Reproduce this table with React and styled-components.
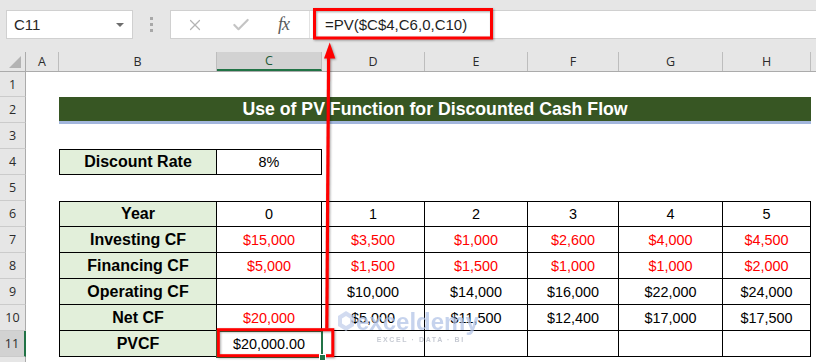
import React from 'react';
import styled, { createGlobalStyle, css } from 'styled-components';
import { X, Check } from 'lucide-react';

const GRID = '26px 33px 158px 105px 103px 103px 91px 104px 88px 1fr';
const COLUMNS = ['A', 'B', 'C', 'D', 'E', 'F', 'G', 'H'];

const TABLE = [
  { row: 6, label: 'Year', values: ['0', '1', '2', '3', '4', '5'], red: 0 },
  { row: 7, label: 'Investing CF', values: ['$15,000', '$3,500', '$1,000', '$2,600', '$4,000', '$4,500'], red: 6 },
  { row: 8, label: 'Financing CF', values: ['$5,000', '$1,500', '$1,500', '$1,000', '$1,000', '$2,000'], red: 6 },
  { row: 9, label: 'Operating CF', values: ['', '$10,000', '$14,000', '$16,000', '$22,000', '$24,000'], red: 0 },
  { row: 10, label: 'Net CF', values: ['$20,000', '$5,000', '$11,500', '$12,400', '$17,000', '$17,500'], red: 1 },
  { row: 11, label: 'PVCF', values: ['$20,000.00', '', '', '', '', ''], red: 0 },
];

const GlobalStyle = createGlobalStyle`
  html, body {
    margin: 0;
    padding: 0;
    background: #fff;
  }
  body {
    font-family: "Liberation Sans", Arial, sans-serif;
  }
`;

const Window = styled.div`
  position: relative;
  width: 816px;
  height: 362px;
  overflow: hidden;
  background: #fff;
`;

/* ---------- formula bar ---------- */

const Toolbar = styled.div`
  display: flex;
  align-items: flex-start;
  box-sizing: border-box;
  height: 52px;
  padding: 10px 0 0 6px;
  background: #e6e6e6;
`;

const NameBox = styled.div`
  display: flex;
  align-items: center;
  justify-content: space-between;
  box-sizing: border-box;
  width: 127px;
  height: 29px;
  padding: 0 8px 0 7px;
  background: #fff;
  border: 1px solid #d0d0d0;
  font-size: 15px;
  color: #262626;
`;

const DropArrow = styled.span`
  width: 0;
  height: 0;
  border-left: 4px solid transparent;
  border-right: 4px solid transparent;
  border-top: 4px solid #6d6d6d;
`;

const Grip = styled.div`
  display: flex;
  flex-direction: column;
  align-items: center;
  justify-content: center;
  gap: 3px;
  width: 37px;
  height: 29px;

  span {
    width: 3px;
    height: 3px;
    background: #a8a8a8;
  }
`;

const FormulaBar = styled.div`
  display: flex;
  align-items: center;
  flex: 1;
  box-sizing: border-box;
  height: 29px;
  background: #fff;
  border: 1px solid #d0d0d0;
  border-right: none;
`;

const BarButtons = styled.div`
  display: flex;
  align-items: center;
  box-sizing: border-box;
  width: 139px;
  height: 100%;
  border-right: 1px solid #e2e2e2;
  padding-left: 15px;
  gap: 27px;
`;

const Fx = styled.span`
  font-family: "Liberation Serif", "Times New Roman", serif;
  font-style: italic;
  font-size: 18px;
  color: #5a5a5a;
  letter-spacing: -1px;
`;

const FormulaText = styled.div`
  padding-left: 15px;
  font-size: 15px;
  color: #1f1f1f;
`;

/* ---------- sheet ---------- */

const HeaderRow = styled.div`
  display: grid;
  grid-template-columns: ${GRID};
  height: 20px;
  box-sizing: border-box;
  background: #e6e6e6;
  border-bottom: 1px solid #ababab;
`;

const Corner = styled.div`
  position: relative;
  border-right: 1px solid #ababab;

  &::after {
    content: '';
    position: absolute;
    right: 4px;
    bottom: 3px;
    width: 0;
    height: 0;
    border-left: 12px solid transparent;
    border-bottom: 12px solid #b3b3b3;
  }
`;

const ColHead = styled.div`
  display: flex;
  align-items: center;
  justify-content: center;
  box-sizing: border-box;
  border-right: 1px solid #bdbdbd;
  font-family: "Open Sans", "Liberation Sans", sans-serif;
  font-size: 12.5px;
  color: #2b2b2b;

  ${(p) =>
    p.$active &&
    css`
      background: #d2d2d2;
      border-bottom: 2px solid #217346;
      color: #1d5a37;
    `}
`;

const SheetRow = styled.div`
  display: grid;
  grid-template-columns: ${GRID};
  height: ${(p) => p.$h}px;
`;

const RowHead = styled.div`
  display: flex;
  align-items: center;
  justify-content: center;
  box-sizing: border-box;
  background: #e6e6e6;
  border-right: 1px solid #ababab;
  border-bottom: 1px solid #cbcbcb;
  font-family: "Open Sans", "Liberation Sans", sans-serif;
  font-size: 12.5px;
  color: #2b2b2b;

  ${(p) =>
    p.$active &&
    css`
      background: #d2d2d2;
      border-right: 2px solid #217346;
    `}
`;

const Title = styled.div`
  grid-column: 3 / 10;
  display: flex;
  align-items: center;
  justify-content: center;
  box-sizing: border-box;
  background: #375623;
  border-bottom: 2px solid #a2b6dc;
  box-shadow: 0 1px 0 #a2b6dc;
  color: #fff;
  font-weight: 700;
  font-size: 17.7px;
`;

const Cell = styled.div`
  position: relative;
  display: flex;
  align-items: center;
  justify-content: center;
  box-sizing: border-box;
  font-size: 14.4px;
  color: ${(p) => (p.$red ? '#ff0000' : '#000')};

  ${(p) =>
    p.$boxed &&
    css`
      border-right: 1px solid #000;
      border-bottom: 1px solid #000;
    `}
  ${(p) => p.$left && 'border-left: 1px solid #000;'}
  ${(p) => p.$top && 'border-top: 1px solid #000;'}
  ${(p) =>
    p.$label &&
    css`
      background: #e2efda;
      font-weight: 700;
      font-size: 16px;
    `}
  ${(p) =>
    p.$selected &&
    css`
      &::after {
        content: '';
        position: absolute;
        inset: -1px -2px -2px -1px;
        border: 2px solid #217346;
      }
      &::before {
        content: '';
        position: absolute;
        right: -5px;
        bottom: -5px;
        width: 5px;
        height: 5px;
        background: #217346;
        border: 1px solid #fff;
        z-index: 1;
      }
    `}
`;

/* ---------- overlays ---------- */

const Markup = styled.svg`
  position: absolute;
  left: 0;
  top: 0;
  pointer-events: none;
  filter: drop-shadow(1.5px 1.5px 1px rgba(0, 0, 0, 0.35));
`;

const Watermark = styled.div`
  position: absolute;
  left: 337px;
  top: 309px;
  display: flex;
  align-items: flex-start;
  gap: 1px;
  opacity: 0.75;
  pointer-events: none;
`;

const MarkText = styled.div`
  display: flex;
  flex-direction: column;
  align-items: flex-end;
`;

const MarkWord = styled.span`
  font-weight: 700;
  font-size: 24px;
  line-height: 26px;
  color: #b4c5e8;
`;

const MarkSub = styled.span`
  margin-top: 1px;
  margin-right: 14px;
  font-weight: 700;
  font-size: 7px;
  letter-spacing: 1.6px;
  color: #b3b8c4;
`;

const rowHeights = { 1: 25 };
const heightOf = (n) => rowHeights[n] || 26;

function Row({ n, hideLabel, children }) {
  return (
    <SheetRow $h={heightOf(n)}>
      <RowHead $active={n === 11}>{hideLabel ? null : n}</RowHead>
      {children}
    </SheetRow>
  );
}

export default function App() {
  return (
    <Window>
      <GlobalStyle />
      <Toolbar>
        <NameBox>
          C11
          <DropArrow />
        </NameBox>
        <Grip>
          <span />
          <span />
          <span />
        </Grip>
        <FormulaBar>
          <BarButtons>
            <X size={18} strokeWidth={1.6} color="#b4b4b4" />
            <Check size={20} strokeWidth={2.6} color="#c4c4c4" />
            <Fx>fx</Fx>
          </BarButtons>
          <FormulaText>=PV($C$4,C6,0,C10)</FormulaText>
        </FormulaBar>
      </Toolbar>

      <HeaderRow>
        <Corner />
        {COLUMNS.map((c) => (
          <ColHead key={c} $active={c === 'C'}>
            {c}
          </ColHead>
        ))}
      </HeaderRow>

      <Row n={1} />
      <Row n={2}>
        <div />
        <Title>Use of PV Function for Discounted Cash Flow</Title>
      </Row>
      <Row n={3} />
      <Row n={4}>
        <div />
        <Cell $boxed $left $top $label>
          Discount Rate
        </Cell>
        <Cell $boxed $top>
          8%
        </Cell>
      </Row>
      <Row n={5} />
      {TABLE.map((r) => (
        <Row key={r.row} n={r.row}>
          <div />
          <Cell $boxed $left $top={r.row === 6} $label>
            {r.label}
          </Cell>
          {r.values.map((v, i) => (
            <Cell
              key={i}
              $boxed
              $top={r.row === 6}
              $red={i < r.red}
              $selected={r.row === 11 && i === 0}
            >
              {v}
            </Cell>
          ))}
        </Row>
      ))}
      <Row n={12} hideLabel />

      <Watermark>
        <svg width="18" height="24" viewBox="0 0 18 24">
          <path d="M9 2 L17 7 L17 17 L9 22 L1 17 L1 7 Z" fill="#c3d0ec" />
          <path d="M9 7 L13 9.5 L13 14.5 L9 17 L5 14.5 L5 9.5 Z" fill="#fff" />
        </svg>
        <MarkText>
          <MarkWord>exceldemy</MarkWord>
          <MarkSub>EXCEL · DATA · BI</MarkSub>
        </MarkText>
      </Watermark>

      <Markup width="816" height="362" viewBox="0 0 816 362">
        <rect x="314.5" y="9.5" width="177" height="28.5" fill="none" stroke="#ff0000" strokeWidth="3" />
        <rect x="218.3" y="329.7" width="114.5" height="26" fill="none" stroke="#ff0000" strokeWidth="3" />
        <line x1="326.8" y1="328.5" x2="328.6" y2="56" stroke="#ff0000" strokeWidth="3.2" />
        <polygon points="329.7,42.5 335.3,58.5 324,58.5" fill="#ff0000" />
      </Markup>
    </Window>
  );
}
